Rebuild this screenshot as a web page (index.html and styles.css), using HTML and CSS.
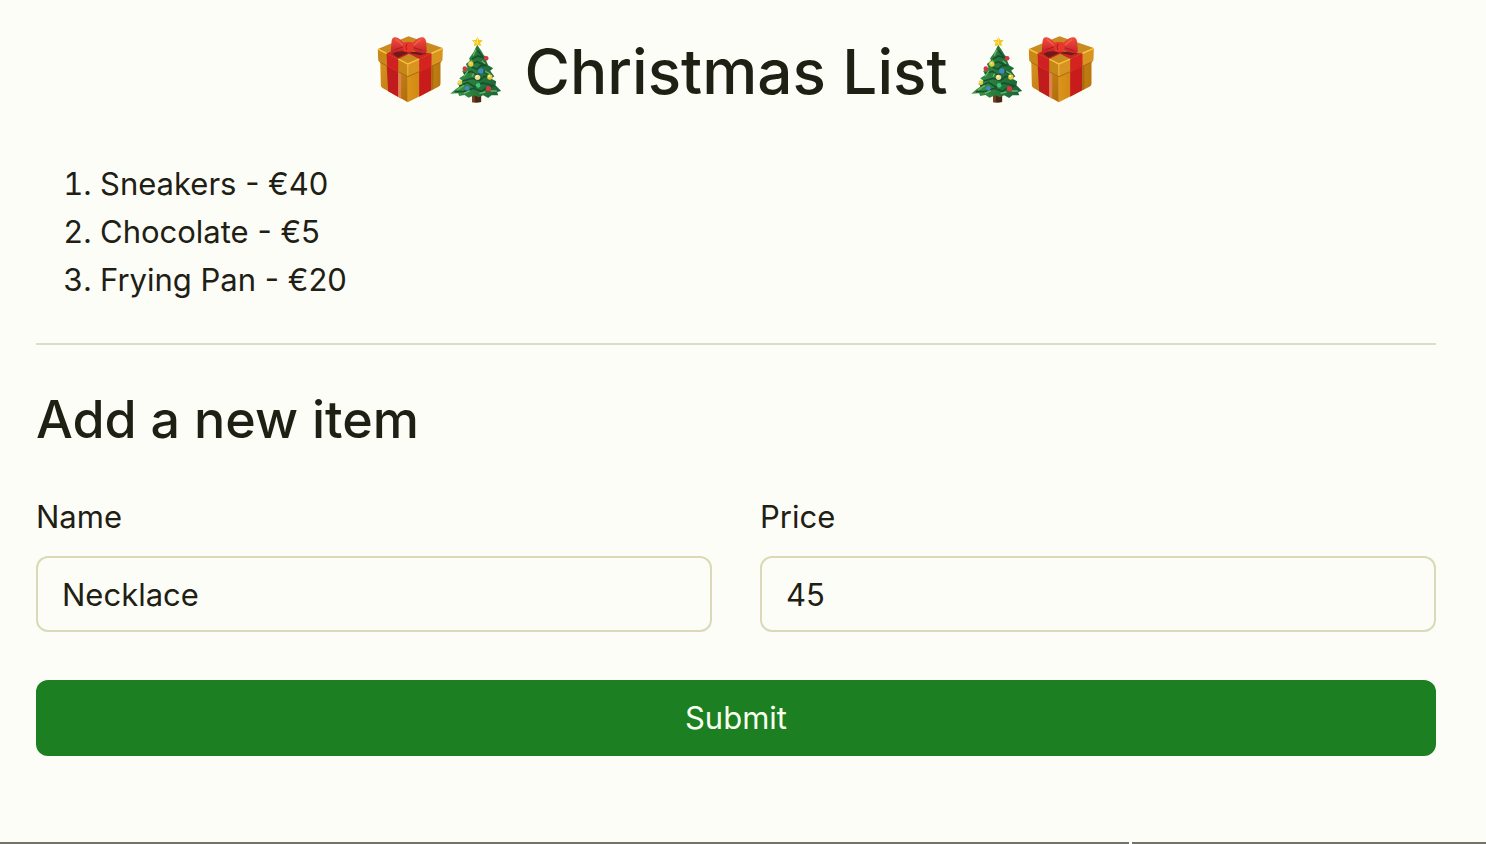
FILE: index.html
```html
<!DOCTYPE html>
<html lang="en">
<head>
<meta charset="utf-8">
<meta name="viewport" content="width=device-width, initial-scale=1">
<title>Christmas List</title>
<link rel="stylesheet" href="styles.css">
</head>
<body>
<svg class="defs" aria-hidden="true">
  <defs>
    <linearGradient id="gold" x1="0" y1="0" x2="1" y2="1"><stop offset="0" stop-color="#d99420"/><stop offset="1" stop-color="#b06c08"/></linearGradient>
    <linearGradient id="goldRight" x1="0" y1="0" x2="1" y2="0"><stop offset="0" stop-color="#dc9418"/><stop offset="1" stop-color="#b87610"/></linearGradient>
    <linearGradient id="bow" x1="0" y1="0" x2="0" y2="1"><stop offset="0" stop-color="#f0503e"/><stop offset="1" stop-color="#c8202a"/></linearGradient>
    <linearGradient id="leaf" x1="0" y1="0" x2="1" y2="0"><stop offset="0" stop-color="#3f9a4a"/><stop offset=".5" stop-color="#287a3c"/><stop offset="1" stop-color="#1c6238"/></linearGradient>
    <symbol id="gift" viewBox="32 33 200 201">
      <path d="M41 100 L124 143 L124 232 L48 189 Q43 186 43 181Z" fill="url(#gold)"/>
      <path d="M124 143 L222 98 L222 176 Q222 182 216 185 L124 232Z" fill="url(#goldRight)"/>
      <path d="M60 112 L95 128 L95 216 L65 199Z" fill="#c01c1e"/>
      <path d="M95 128 L104 132 L104 221 L95 216Z" fill="#e08050"/>
      <path d="M158 128 L194 112 L194 196 L158 215Z" fill="#c81c1c"/>
      <path d="M194 112 L201 109 L201 192 L194 196Z" fill="#a86c10"/>
      <path d="M34 72 L126 34 L229 69 L124 118Z" fill="#c98a20"/>
      <path d="M34 72 L124 116 L124 155 L39 111 Q35 108 35 104Z" fill="#c88818"/>
      <path d="M124 116 L229 70 L228 104 Q228 108 223 111 L124 155Z" fill="#d89420"/>
      <path d="M60 86 L95 103 L95 140 L62 123Z" fill="#d02022"/>
      <path d="M158 102 L195 85 L195 125 L158 140Z" fill="#d42420"/>
      <path d="M60 86 L98 67 L151 83 L195 85 L158 102 L128 86 L95 103Z" fill="#c82824"/>
      <path d="M77 86 Q104 73 128 84 Q156 75 181 85 L161 91 L125 84 L94 98Z" fill="#701a17"/>
      <path d="M36 73 L60 85 M95 102 L124 117 L158 102 M195 85 L227 71" fill="none" stroke="#ffc63d" stroke-width="4"/>
      <path d="M124 118V154" stroke="#f5b63b" stroke-width="3"/>
      <path d="M41 112 L62 123 M95 140 L124 155 L158 140 M195 124 L223 111" fill="none" stroke="#a96a13" stroke-width="3"/>
      <path d="M112 53 Q93 34 83 37 Q76 39 75 50 L73 77 Q75 84 85 81 Q100 77 113 75Z" fill="url(#bow)"/>
      <path d="M138 53 Q158 34 170 37 Q178 40 179 53 L181 78 Q179 88 168 85 Q150 82 139 76Z" fill="url(#bow)"/>
      <rect x="110" y="51" width="30" height="29" rx="9" fill="#e7372d"/>
      <path d="M88 43 Q99 50 109 61 M164 43 Q153 49 142 61" fill="none" stroke="#f5604a" stroke-width="4"/>
      <path d="M84 74 L109 66 M169 77 L142 68 M121 57 Q116 68 121 75" fill="none" stroke="#a81c24" stroke-width="3"/>
    </symbol>
    <symbol id="tree" viewBox="246 33 158 201">
      <path d="M315 200H342V231Q328 236 315 231Z" fill="#4b2715"/>
      <path d="M315 204h8v28h-8z" fill="#77401e"/>
      <path d="M330 59 L342 77 L350 91 L362 100 L356 105 L363 121 L378 130 L369 137 L380 152 L374 162 L387 169 L385 181 L402 198 L390 201 L393 211 L373 211 L363 219 L348 211 L335 217 L321 211 L304 218 L292 210 L276 213 L273 205 L249 206 L263 194 L279 183 L270 177 L286 168 L276 160 L291 150 L285 138 L301 128 L296 117 L308 107 L306 100 L319 82Z" fill="url(#leaf)"/>
      <path d="M331 76 L348 98 L331 93 L314 103 M304 123 L329 110 L358 122 L342 121 L329 133 L313 126 M290 145 L313 139 L330 151 L348 139 L374 153 L351 155 L337 166 L315 160 L286 168 M276 184 L301 172 L323 186 L346 174 L382 183 L359 188 L342 199 L319 190 L292 199 L263 200" fill="none" stroke="#17512e" stroke-width="5"/>
      <path d="M326 74 L318 92 M315 106 L303 119 M344 107 L354 116 M302 138 L290 154 M354 139 L369 147 M320 145 L314 155 M290 181 L270 195 M308 197 L290 205 M337 205 L355 201 M370 198 L389 198" fill="none" stroke="#65b765" stroke-width="4"/>
      <path d="M331 36 L336 45 L347 46 L339 53 L342 64 L331 59 L320 64 L322 53 L314 46 L326 45Z" fill="#f5c51d"/>
      <path d="M331 39V56L320 48" fill="none" stroke="#ffe867" stroke-width="3"/>
      <g fill="#d83640"><circle cx="357" cy="100" r="7"/><circle cx="293" cy="131" r="7"/><circle cx="364" cy="191" r="8"/></g>
      <g fill="#e9cc3d"><circle cx="311" cy="117" r="8"/><circle cx="368" cy="156" r="8"/><circle cx="278" cy="173" r="7"/></g>
      <g fill="#4387c9"><circle cx="341" cy="138" r="8"/><circle cx="300" cy="190" r="7"/></g>
      <circle cx="331" cy="157" r="8" fill="#f1db93"/><circle cx="333" cy="181" r="7" fill="#3cc477"/>
      <g fill="#fff4b8"><circle cx="309" cy="114" r="2"/><circle cx="329" cy="154" r="3"/><circle cx="366" cy="153" r="3"/><circle cx="276" cy="171" r="2"/></g>
    </symbol>
  </defs>
</svg>
<main class="page">
  <h1 class="title">
    <span class="icons" aria-hidden="true"><svg class="gift"><use href="#gift"/></svg><svg class="tree"><use href="#tree"/></svg></span>
    <span>Christmas List</span>
    <span class="icons" aria-hidden="true"><svg class="tree"><use href="#tree"/></svg><svg class="gift"><use href="#gift"/></svg></span>
  </h1>
  <ol class="items">
    <li>Sneakers - €40</li>
    <li>Chocolate - €5</li>
    <li>Frying Pan - €20</li>
  </ol>
  <hr class="divider">
  <h2 class="subtitle">Add a new item</h2>
  <form class="form">
    <div class="field">
      <label for="name">Name</label>
      <input id="name" type="text" value="Necklace">
    </div>
    <div class="field">
      <label for="price">Price</label>
      <input id="price" type="text" inputmode="decimal" value="45">
    </div>
    <button class="submit" type="button">Submit</button>
  </form>
</main>
<footer class="edge"></footer>
</body>
</html>
```
FILE: styles.css
```css
* {
  box-sizing: border-box;
}

body {
  display: flex;
  flex-direction: column;
  min-height: 100vh;
  margin: 0;
  background: #fdfdf8;
  color: #1e2014;
  font: 400 31px/48px Inter, "Liberation Sans", sans-serif;
}

.defs {
  position: absolute;
  width: 0;
  height: 0;
}

.page {
  flex: 1;
  padding: 32px 50px 32px 36px;
}

.title {
  display: flex;
  justify-content: center;
  align-items: center;
  gap: 22px;
  margin: 0 0 48px;
  font-size: 62px;
  font-weight: 500;
  line-height: 80px;
}

.icons {
  display: flex;
  gap: 5px;
  padding-bottom: 5px;
}

.gift {
  width: 67px;
  height: 67px;
}

.tree {
  width: 53px;
  height: 67px;
}

.items {
  margin: 0;
  padding-left: 64px;
}

.divider {
  height: 2px;
  margin: 39px 0 40px;
  border: 0;
  background: #dcdcc8;
}

.subtitle {
  margin: 0 0 38px;
  font-size: 52px;
  font-weight: 500;
  line-height: 70px;
}

.form {
  display: grid;
  grid-template-columns: 1fr 1fr;
  gap: 48px;
}

.field {
  display: flex;
  flex-direction: column;
  gap: 15px;
}

.field input {
  width: 100%;
  height: 76px;
  padding: 12px 24px;
  border: 2px solid #dadab8;
  border-radius: 12px;
  background: transparent;
  color: inherit;
  font: inherit;
}

.submit {
  grid-column: 1 / -1;
  height: 76px;
  border: 0;
  border-radius: 12px;
  background: #1c7f22;
  color: #f8fff0;
  font: inherit;
}

.edge {
  height: 2px;
  background: linear-gradient(90deg, #73736b 76%, #fdfdf8 76% 76.2%, #73736b 76.2%);
}
```
